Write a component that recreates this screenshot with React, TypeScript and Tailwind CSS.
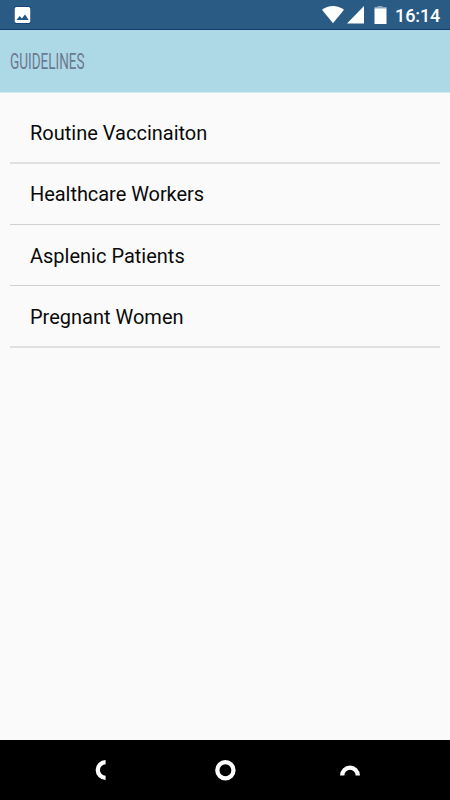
const items = [
  { label: 'Routine Vaccinaiton', size: 'h-[71px] pt-[11px] border-b-2 border-[#e0e0e0]' },
  { label: 'Healthcare Workers', size: 'h-[61px] border-b border-[#d0d0d0] tracking-[-0.05px]' },
  { label: 'Asplenic Patients', size: 'h-[61px] pt-[2px] border-b border-[#d0d0d0]' },
  { label: 'Pregnant Women', size: 'h-[62px] pt-[2px] border-b-2 border-[#e0e0e0]' },
];

function StatusBar() {
  return (
    <div className="flex h-[30px] items-center border-b border-[#123f70] bg-[#2a5b84]">
      <svg className="ml-[14px] h-[18px] w-[17px]" viewBox="0 0 17 18">
        <rect x="0" y="0" width="17" height="18" rx="2" fill="#164778" />
        <rect x="0.7" y="1" width="15.6" height="16" rx="1.7" fill="#fff" />
        <path d="M2.5 14l3.2-4 2.2 2.6 3.1-4.1 3.7 5.5z" fill="#255783" />
      </svg>
      <svg className="ml-auto h-[19px] w-[22px]" viewBox="0 0 22 19">
        <path d="M0 4.7C6-.4 16-.4 22 4.7L11 18.3z" fill="#fff" />
      </svg>
      <svg className="ml-[3px] h-[18px] w-[17px]" viewBox="0 0 17 18">
        <path d="M0 17.5L17 0v17.5z" fill="#fff" />
      </svg>
      <svg className="ml-[10px] h-[18px] w-[13px]" viewBox="0 0 13 18">
        <path d="M3.5 0h5v1h4v2H.5V1h3z" fill="#8ba5bc" />
        <path d="M.5 2.5h12V18H.5z" fill="#fff" />
      </svg>
      <span className="mr-[10px] ml-[8px] w-[45px] pt-[2px] text-[18px] leading-none font-medium tracking-[-0.1px] whitespace-nowrap text-white">16:14</span>
    </div>
  );
}

function NavBar() {
  return (
    <div className="flex h-[60px] items-center justify-between bg-black pr-[90px] pl-[95px]">
      <svg className="h-5 w-[11px]" viewBox="0 0 11 20" fill="none" stroke="#fff" strokeWidth="4.3">
        <path d="M10.6 2.2a7.8 7.8 0 0 0 0 15.6" />
      </svg>
      <svg className="ml-[19px] h-[22px] w-[21px]" viewBox="0 0 21 22" fill="none" stroke="#fff" strokeWidth="4.3">
        <circle cx="10.4" cy="11.2" r="8.1" />
      </svg>
      <svg className="ml-[14px] h-5 w-5" viewBox="0 0 20 20" fill="none" stroke="#fff" strokeWidth="4.3">
        <path d="M2.2 15.5a7.8 7.8 0 0 1 15.6 0" />
      </svg>
    </div>
  );
}

export default function App() {
  return (
    <div className="flex h-[800px] w-[450px] flex-col overflow-hidden bg-[#fafafa] font-[Roboto,sans-serif]">
      <StatusBar />
      <header className="flex h-[63px] items-center border-b border-[#d2e9f0] bg-[#add8e6] pl-[9.5px]">
        <h1 className="origin-left scale-x-[0.615] pt-px text-[22px] leading-none font-normal text-[#6b7890]">GUIDELINES</h1>
      </header>
      <ul className="flex-1 px-[10px]">
        {items.map((item) => (
          <li key={item.label} className={`flex items-center pl-5 text-[20px] text-[#0a0a0a] ${item.size}`}>
            {item.label}
          </li>
        ))}
      </ul>
      <NavBar />
    </div>
  );
}
